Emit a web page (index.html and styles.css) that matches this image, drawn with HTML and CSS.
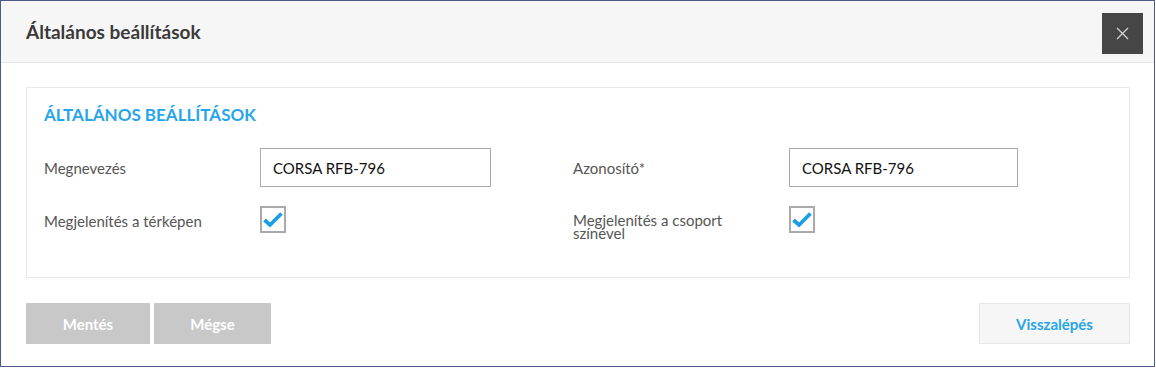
FILE: index.html
```html
<!DOCTYPE html>
<html lang="hu">
<head>
    <meta charset="UTF-8">
    <title>Általános beállítások</title>
    <link rel="stylesheet" href="styles.css">
</head>
<body>
    <div class="dialog">
        <!-- Header -->
        <header class="dialog-header">
            <h1>Általános beállítások</h1>
            <button class="close-btn" aria-label="Bezárás">
                <svg width="13" height="13" viewBox="0 0 13 13">
                    <path d="M1 1 L12 12 M12 1 L1 12" stroke="#d0d0d0" stroke-width="1.3" fill="none"/>
                </svg>
            </button>
        </header>

        <!-- Body -->
        <main class="dialog-body">
            <section class="card">
                <h2>ÁLTALÁNOS BEÁLLÍTÁSOK</h2>
                <div class="form-grid">
                    <div class="field">
                        <label class="field-label">Megnevezés</label>
                        <input class="text-input" type="text" value="CORSA RFB-796">
                    </div>
                    <div class="field">
                        <label class="field-label">Azonosító*</label>
                        <input class="text-input narrow" type="text" value="CORSA RFB-796">
                    </div>
                    <div class="field check-field">
                        <label class="field-label">Megjelenítés a térképen</label>
                        <span class="checkbox">
                            <svg width="20" height="17" viewBox="0 0 20 17">
                                <path d="M1.5 9 L7 14 L18.5 2.5" stroke="#1a9fe6" stroke-width="3.8" fill="none"/>
                            </svg>
                        </span>
                    </div>
                    <div class="field check-field">
                        <label class="field-label wrap">Megjelenítés a csoport színével</label>
                        <span class="checkbox">
                            <svg width="20" height="17" viewBox="0 0 20 17">
                                <path d="M1.5 9 L7 14 L18.5 2.5" stroke="#1a9fe6" stroke-width="3.8" fill="none"/>
                            </svg>
                        </span>
                    </div>
                </div>
            </section>

            <div class="actions">
                <div class="actions-left">
                    <button class="btn btn-disabled save">Mentés</button>
                    <button class="btn btn-disabled cancel">Mégse</button>
                </div>
                <button class="btn btn-back">Visszalépés</button>
            </div>
        </main>
    </div>
</body>
</html>
```

FILE: styles.css
```css
/* General */
* {
    box-sizing: border-box;
}

body {
    margin: 0;
    font-family: 'Lato', 'Open Sans', sans-serif;
    background-color: #fff;
    color: #555;
}

.dialog {
    width: 1155px;
    height: 367px;
    border: 1px solid #4b5b86;
    background-color: #fff;
}

/* Header */
.dialog-header {
    height: 62px;
    background-color: #f6f6f6;
    border-bottom: 1px solid #e6e6e6;
    display: flex;
    align-items: center;
    justify-content: space-between;
    padding: 0 11px 0 25px;
}

.dialog-header h1 {
    margin: 0;
    font-size: 19px;
    font-weight: bold;
    color: #3a3a3a;
}

.close-btn {
    width: 41px;
    height: 41px;
    border: none;
    background-color: #464646;
    display: flex;
    align-items: center;
    justify-content: center;
    padding: 0;
    margin-top: 3px;
}

/* Body */
.dialog-body {
    padding: 24px 24px 0 25px;
}

.card {
    border: 1px solid #e8e8e8;
    height: 191px;
    padding: 17px 17px 0 17px;
}

.card h2 {
    margin: 0 0 23px 0;
    font-size: 17px;
    font-weight: bold;
    color: #27a5ea;
    line-height: 20px;
}

.form-grid {
    display: grid;
    grid-template-columns: 529px 1fr;
    row-gap: 19px;
}

.field {
    display: flex;
    align-items: center;
}

.field-label {
    width: 216px;
    font-size: 15px;
    color: #555;
}

.field-label.wrap {
    width: 165px;
    margin-right: 51px;
    line-height: 13px;
    padding-top: 8px;
}

.check-field {
    align-items: flex-start;
}

.check-field .field-label:not(.wrap) {
    padding-top: 6px;
}

.text-input {
    width: 231px;
    height: 39px;
    border: 1px solid #aaa;
    padding: 0 12px;
    font-family: 'Lato', 'Open Sans', sans-serif;
    font-size: 15px;
    color: #111;
    outline: none;
}

.text-input.narrow {
    width: 229px;
}

.checkbox {
    width: 26px;
    height: 27px;
    border: 2px solid #aaa;
    display: flex;
    align-items: center;
    justify-content: center;
}

/* Buttons */
.actions {
    display: flex;
    justify-content: space-between;
    margin-top: 25px;
}

.actions-left {
    display: flex;
    gap: 4px;
}

.btn {
    height: 41px;
    border: none;
    font-family: 'Lato', 'Open Sans', sans-serif;
    font-size: 15px;
    font-weight: bold;
}

.btn-disabled {
    background-color: #c8c8c8;
    color: #fff;
}

.save {
    width: 124px;
}

.cancel {
    width: 117px;
}

.btn-back {
    width: 151px;
    background-color: #f6f6f6;
    border: 1px solid #e6e6e6;
    color: #27a5ea;
}
```
